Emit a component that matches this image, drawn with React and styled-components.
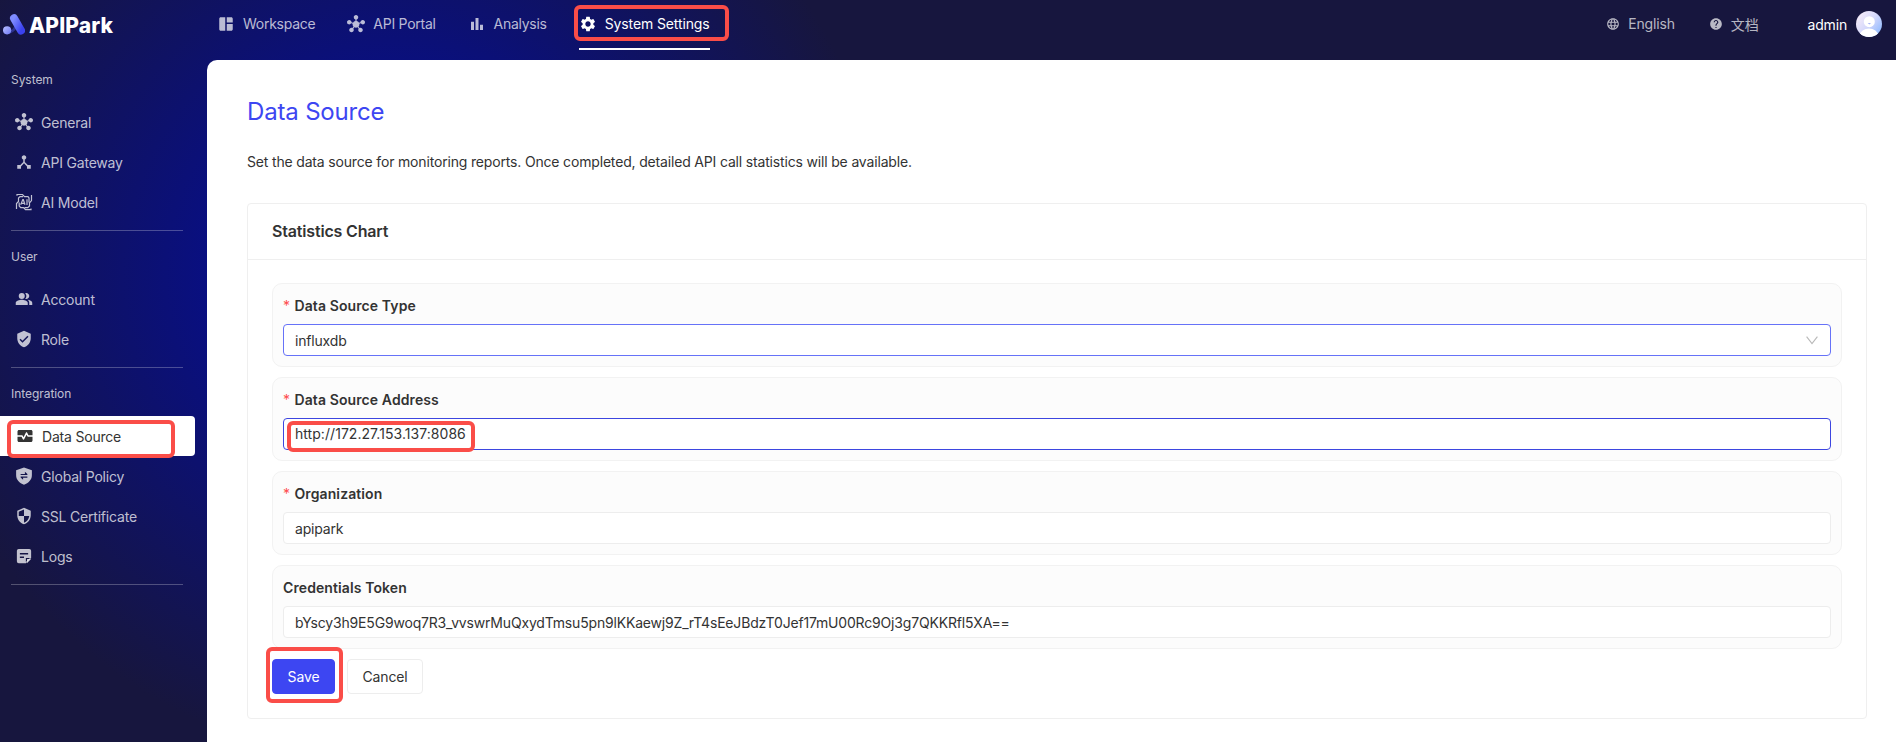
import React from "react";
import styled, { createGlobalStyle } from "styled-components";
import {
  MdHub, MdDeviceHub, MdSpaceDashboard, MdBarChart, MdSettings, MdPeopleAlt,
  MdVerifiedUser, MdMonitorHeart, MdSecurity, MdLanguage, MdHelp,
} from "react-icons/md";

const GlobalStyle = createGlobalStyle`
  * { box-sizing: border-box; }
  body {
    margin: 0;
    font-family: Inter, "Noto Sans CJK SC", sans-serif;
    font-size: 14px;
    letter-spacing: -0.17px;
    color: #333;
    -webkit-font-smoothing: antialiased;
  }
`;

const Shell = styled.div`
  position: relative;
  display: flex;
  flex-direction: column;
  height: 742px;
  overflow: hidden;
  background: radial-gradient(circle at 400px 275px, #070e8a 150px, #17163e 490px);
`;

const Header = styled.header`
  display: flex;
  align-items: center;
  height: 60px;
  flex: none;
  padding: 0 14px 12px 3px;
`;

const Brand = styled.div`
  display: flex;
  align-items: center;
  width: 214px;
  gap: 4px;
  color: #fff;
`;

const BrandName = styled.span`
  font-size: 21px;
  line-height: 24px;
  font-weight: 800;
  letter-spacing: 0.15px;
  padding-top: 4px;
`;

const Nav = styled.nav`
  display: flex;
  gap: 32px;
  flex: 1;
`;

const NavItem = styled.a`
  display: flex;
  align-items: center;
  gap: 8px;
  height: 50px;
  margin-bottom: -2px;
  padding-bottom: 1px;
  letter-spacing: ${(p) => (p.$active ? -0.12 : -0.27)}px;
  border-bottom: 2px solid ${(p) => (p.$active ? "#fff" : "transparent")};
  color: ${(p) => (p.$active ? "#fff" : "rgba(255,255,255,0.72)")};
  svg { width: 18px; height: 18px; }
`;

const Tools = styled.div`
  display: flex;
  align-items: center;
  color: rgba(255, 255, 255, 0.7);
`;

const Tool = styled.span`
  display: flex;
  align-items: center;
  gap: 8px;
  margin-right: ${(p) => p.$gap}px;
  padding-bottom: 1px;
  svg { width: 14px; height: 14px; }
`;

const User = styled.span`
  display: flex;
  align-items: center;
  gap: 9px;
  color: #fff;
`;

const Main = styled.div`
  display: flex;
  flex: 1;
  min-height: 0;
`;

const Sidebar = styled.aside`
  width: 207px;
  flex: none;
  margin-top: -6px;
`;

const Section = styled.section`
  padding-bottom: 8px;
  &::after {
    content: "";
    display: block;
    height: 1px;
    width: 172px;
    margin: 8px 0 -8px 11px;
    background: rgba(255, 255, 255, 0.26);
  }
`;

const SectionLabel = styled.div`
  height: 48px;
  padding: 17px 0 0 11px;
  font-size: 12px;
  line-height: 18px;
  letter-spacing: -0.05px;
  color: rgba(255, 255, 255, 0.74);
`;

const SideItem = styled.a`
  display: flex;
  align-items: center;
  gap: 8px;
  height: 40px;
  width: 195px;
  padding-left: ${(p) => (p.$active ? 16 : 15)}px;
  border-radius: 0 4px 4px 0;
  background: ${(p) => (p.$active ? "#fff" : "transparent")};
  color: ${(p) => (p.$active ? "#333" : "rgba(255,255,255,0.74)")};
  letter-spacing: -0.2px;
  svg { width: 18px; height: 18px; }
`;

const Content = styled.main`
  flex: 1;
  background: #fff;
  border-top-left-radius: 10px;
  padding: 35px 29px 0 40px;
`;

const Title = styled.h1`
  margin: 0;
  font-size: 24px;
  line-height: 34px;
  font-weight: 400;
  color: #3d46f2;
`;

const Intro = styled.p`
  margin: 22px 0 30px;
  line-height: 22px;
`;

const Card = styled.section`
  height: 516px;
  border: 1px solid #efefef;
  border-radius: 4px;
`;

const CardHead = styled.h2`
  margin: 0;
  height: 56px;
  padding: 0 24px;
  border-bottom: 1px solid #efefef;
  font-size: 16px;
  line-height: 55px;
  font-weight: 600;
`;

const Form = styled.form`
  display: flex;
  flex-direction: column;
  gap: 10px;
  padding: 23px 24px 24px;
`;

const Field = styled.div`
  height: 84px;
  padding: 10px;
  border: 1px solid #f2f2f2;
  border-radius: 10px;
  background: #fcfcfc;
`;

const Label = styled.label`
  display: flex;
  gap: 4px;
  height: 30px;
  padding-top: 1px;
  line-height: 22px;
  font-weight: 600;
  letter-spacing: 0.1px;
`;

const Star = styled.span`
  width: 7.500px;
  color: #ff4d4f;
  font-weight: 400;
`;

const Control = styled.div`
  display: flex;
  align-items: center;
  justify-content: space-between;
  height: 32px;
  padding: 0 12px 0 11px;
  padding-bottom: ${(p) => p.$lift || 0}px;
  letter-spacing: ${(p) => (p.$lift ? 0.05 : -0.18)}px;
  border: 1px solid ${(p) => p.$line || "#ededed"};
  border-radius: 4px;
  background: #fff;
`;

const Actions = styled.div`
  display: flex;
  gap: 12px;
`;

const Button = styled.button`
  height: 35px;
  width: ${(p) => (p.$primary ? 63 : 76)}px;
  padding: 0;
  border: 1px solid ${(p) => (p.$primary ? "#3d46f2" : "#ededed")};
  border-radius: 4px;
  background: ${(p) => (p.$primary ? "#3d46f2" : "#fff")};
  color: ${(p) => (p.$primary ? "#fff" : "#333")};
  font: inherit;
  letter-spacing: -0.15px;
`;

const Marker = styled.div`
  position: absolute;
  left: ${(p) => p.$x}px;
  top: ${(p) => p.$y}px;
  width: ${(p) => p.$w}px;
  height: ${(p) => p.$h}px;
  border: 4px solid #fa4d48;
  border-radius: 6px;
  pointer-events: none;
`;

const LogoMark = () => (
  <svg width="22" height="21" viewBox="0 0 22 21">
    <defs>
      <linearGradient id="bar" x1="0" y1="0" x2="1" y2="1">
        <stop offset="0" stopColor="#7f8cff" />
        <stop offset="1" stopColor="#3b42f0" />
      </linearGradient>
      <linearGradient id="dot" x1="0" y1="0" x2="1" y2="1">
        <stop offset="0" stopColor="#b9c0ff" />
        <stop offset="1" stopColor="#6f79f8" />
      </linearGradient>
    </defs>
    <path d="M4 16.5C9 17 11.5 14 11.5 9.5L14 13C12.500 17 9 19.500 4.500 20Z" fill="#4048c8" opacity="0.55" />
    <path d="M11 4.300L18 16.500" stroke="url(#bar)" strokeWidth="8" strokeLinecap="round" />
    <circle cx="4.100" cy="16.300" r="4.100" fill="url(#dot)" />
  </svg>
);

const AiIcon = () => (
  <svg viewBox="0 0 18 18" fill="none" stroke="currentColor" strokeWidth="1.200">
    <path d="M2 2.800V1.500H7.500L9.500 3.600H13L14 5V9.500" />
    <path d="M16.500 2V7.500L14.500 10V13L12.800 14.600H9.500" />
    <path d="M1.500 16V10.500L3.500 8.500V5L5 3.600H8" />
    <path d="M4.200 9.500V13L5.700 14.600H8.500L10.500 16.700H16V15.400" />
    <path d="M5.700 11.800L7.800 6.500H8.300L10 11.800M6.600 10.300H9.300M12 6.300V12" />
  </svg>
);

const PolicyIcon = () => (
  <svg viewBox="0 0 24 24" fill="currentColor">
    <path fillRule="evenodd" d="M12 .8 22.500 4.200V11C22.500 17 18 21.500 12 23.500 6 21.500 1.500 17 1.500 11V4.200ZM7.500 10.800H16.500V9.300L13.200 6.300V9.200H7.500ZM16.500 12.600H7.500V14.100L10.800 17.100V14.200H16.500Z" />
  </svg>
);

const LogIcon = () => (
  <svg viewBox="0 0 24 24" fill="currentColor">
    <path fillRule="evenodd" d="M5 2.500H19A2.500 2.500 0 0 1 21.500 5V14.500L14.500 21.500H5A2.500 2.500 0 0 1 2.500 19V5A2.500 2.500 0 0 1 5 2.500ZM6.500 8V10H17.500V8ZM6.500 12.500V14.500H12V12.500ZM14.500 20V14.500H20Z" />
    <path d="M16 21.500V16H21.500Z" />
  </svg>
);

const Avatar = () => (
  <svg width="26" height="26" viewBox="0 0 26 26">
    <defs>
      <linearGradient id="sky" x1="0" y1="0.100" x2="1" y2="0.900">
        <stop offset="0" stopColor="#fbeff8" />
        <stop offset="0.500" stopColor="#d5d8fb" />
        <stop offset="1" stopColor="#86b6ff" />
      </linearGradient>
      <clipPath id="round"><circle cx="13" cy="13" r="13" /></clipPath>
    </defs>
    <g clipPath="url(#round)">
      <rect width="26" height="26" fill="url(#sky)" />
      <circle cx="13.300" cy="10.700" r="5.500" fill="#fff" />
      <ellipse cx="13" cy="24" rx="9" ry="6.500" fill="#fff" />
      <path d="M11.700 11.900H15L13.400 13.500Z" fill="#a9b4f6" />
    </g>
  </svg>
);

const Chevron = () => (
  <svg width="12" height="9" viewBox="0 0 12 9" fill="none" stroke="#b8b8b8" strokeWidth="1.100">
    <path d="M.6 .6 6 7.700 11.400 .6" />
  </svg>
);

const navItems = [
  ["Workspace", MdSpaceDashboard],
  ["API Portal", MdHub],
  ["Analysis", MdBarChart],
  ["System Settings", MdSettings],
];

const sections = [
  ["System", [["General", MdHub], ["API Gateway", MdDeviceHub], ["AI Model", AiIcon]]],
  ["User", [["Account", MdPeopleAlt], ["Role", MdVerifiedUser]]],
  ["Integration", [
    ["Data Source", MdMonitorHeart], ["Global Policy", PolicyIcon],
    ["SSL Certificate", MdSecurity], ["Logs", LogIcon],
  ]],
];

const fields = [
  { label: "Data Source Type", required: true, value: "influxdb", line: "#6672f8", select: true },
  { label: "Data Source Address", required: true, value: "http://172.27.153.137:8086", line: "#3d46e0", lift: 1 },
  { label: "Organization", required: true, value: "apipark" },
  { label: "Credentials Token", value: "bYscy3h9E5G9woq7R3_vvswrMuQxydTmsu5pn9lKKaewj9Z_rT4sEeJBdzT0Jef17mU00Rc9Oj3g7QKKRfl5XA==" },
];

export default function App() {
  return (
    <Shell>
      <GlobalStyle />
      <Header>
        <Brand><LogoMark /><BrandName>APIPark</BrandName></Brand>
        <Nav>
          {navItems.map(([name, Icon]) => (
            <NavItem key={name} $active={name === "System Settings"}><Icon />{name}</NavItem>
          ))}
        </Nav>
        <Tools>
          <Tool $gap={34}><MdLanguage />English</Tool>
          <Tool $gap={49}><MdHelp />文档</Tool>
          <User>admin<Avatar /></User>
        </Tools>
      </Header>
      <Main>
        <Sidebar>
          {sections.map(([title, items]) => (
            <Section key={title}>
              <SectionLabel>{title}</SectionLabel>
              {items.map(([name, Icon]) => (
                <SideItem key={name} $active={name === "Data Source"}><Icon />{name}</SideItem>
              ))}
            </Section>
          ))}
        </Sidebar>
        <Content>
          <Title>Data Source</Title>
          <Intro>Set the data source for monitoring reports. Once completed, detailed API call statistics will be available.</Intro>
          <Card>
            <CardHead>Statistics Chart</CardHead>
            <Form>
              {fields.map((f) => (
                <Field key={f.label}>
                  <Label>{f.required && <Star>*</Star>}{f.label}</Label>
                  <Control $line={f.line} $lift={f.lift}>{f.value}{f.select && <Chevron />}</Control>
                </Field>
              ))}
              <Actions>
                <Button type="button" $primary>Save</Button>
                <Button type="button">Cancel</Button>
              </Actions>
            </Form>
          </Card>
        </Content>
      </Main>
      <Marker $x={574} $y={5} $w={155} $h={36} />
      <Marker $x={7} $y={420} $w={168} $h={38} />
      <Marker $x={287} $y={421} $w={188} $h={31} />
      <Marker $x={266} $y={647} $w={77} $h={56} />
    </Shell>
  );
}
